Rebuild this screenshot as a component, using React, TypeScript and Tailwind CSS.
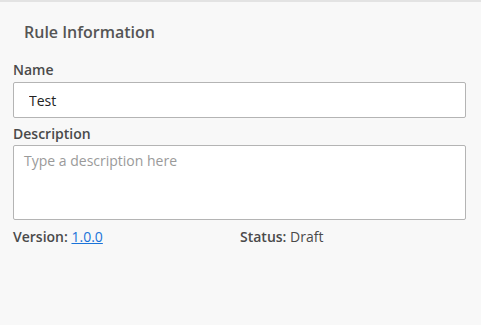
import React from 'react';

const App: React.FC = () => {
  return (
    <div className="w-[481px] h-[325px] bg-[#f8f8f8] border-t-2 border-[#e3e3e3] font-['Open_Sans',sans-serif] text-[#4a4a4a]">
      <div className="px-[13px]">
        <h2 className="pl-[11px] pt-[19px] text-[16px] leading-[22px] font-semibold text-[#555555]">
          Rule Information
        </h2>

        <label className="block mt-[17px] text-[14px] leading-[20px] font-semibold">Name</label>
        <input
          type="text"
          defaultValue="Test"
          className="block mt-[2px] w-[453px] h-[36px] px-[15px] bg-white border border-[#b4b4b4] rounded-[2px] text-[14px] text-[#222] outline-none"
        />

        <label className="block mt-[6px] text-[14px] leading-[20px] font-semibold">Description</label>
        <textarea
          placeholder="Type a description here"
          className="block mt-[1px] w-[453px] h-[75px] px-[10px] py-[5px] bg-white border border-[#b4b4b4] rounded-[2px] text-[14px] leading-[20px] text-[#222] placeholder:text-[#9a9a9a] outline-none resize-none"
        />

        <div className="flex mt-[7px] text-[14px] leading-[20px]">
          <div className="w-[227px]">
            <span className="font-semibold">Version:</span>{' '}
            <a href="#" className="text-[#1a73d9] underline">1.0.0</a>
          </div>
          <div>
            <span className="font-semibold">Status:</span> <span>Draft</span>
          </div>
        </div>
      </div>
    </div>
  );
};

export default App;
